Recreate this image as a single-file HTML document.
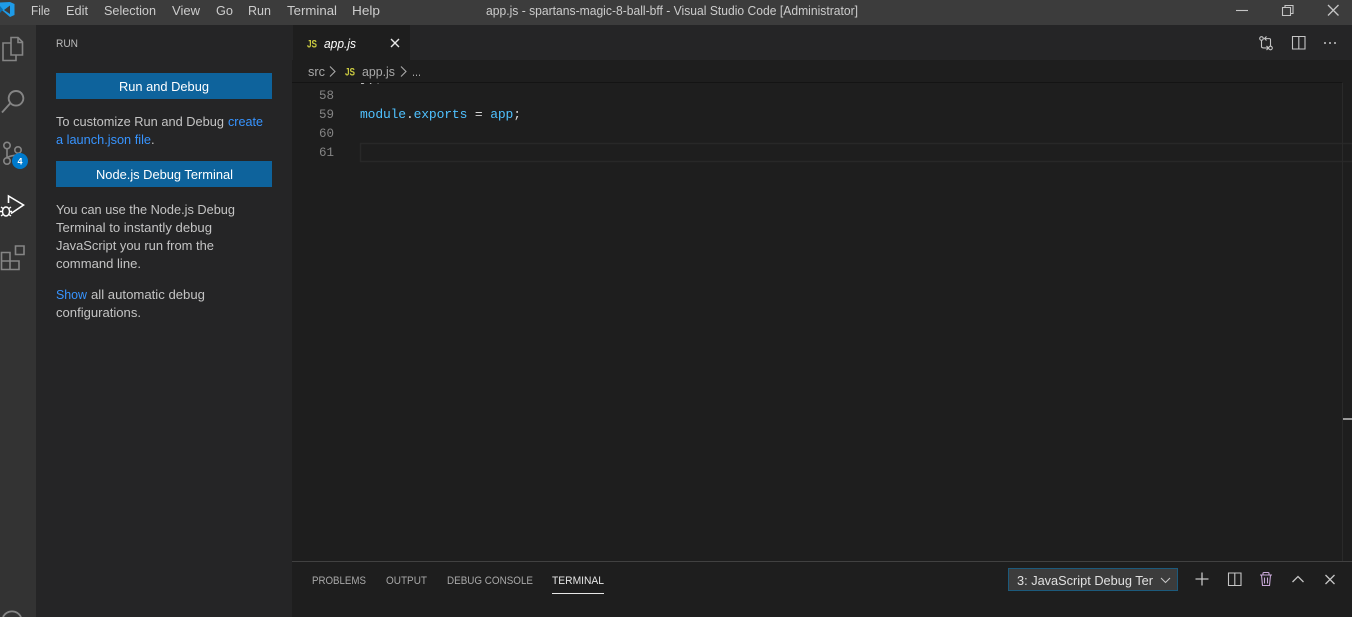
<!DOCTYPE html>
<html lang="en">
<head>
<meta charset="utf-8">
<title>app.js - spartans-magic-8-ball-bff - Visual Studio Code [Administrator]</title>
<style>
html,body{margin:0;padding:0;width:1352px;height:617px;overflow:hidden;background:#1e1e1e}
svg{display:block}
text{font-family:"Liberation Sans",sans-serif;font-size:13px;fill:#ccc;white-space:pre}
.m{fill:#ccc}
.p{fill:#c4c4c4}
.l{fill:#3794ff}
.b{fill:#fff;text-anchor:start}
.c{font-family:"Liberation Mono",monospace;font-size:13px}
.n{font-family:"Liberation Mono",monospace;font-size:13px;fill:#858585}
.t{font-size:11px;fill:#a8a8a8}
.js{font-size:11px;font-weight:bold;fill:#cbcb41}
.i{fill:none;stroke:#858585;stroke-width:1.6}
.w{fill:none;stroke:#c5c5c5;stroke-width:1.1}
</style>
</head>
<body>
<svg width="1352" height="617" viewBox="0 0 1352 617" xmlns="http://www.w3.org/2000/svg">
<!-- backgrounds -->
<rect x="0" y="0" width="1352" height="25" fill="#3c3c3c"/>
<rect x="0" y="25" width="36" height="592" fill="#333"/>
<rect x="36" y="25" width="256" height="592" fill="#252526"/>
<rect x="292" y="25" width="1060" height="592" fill="#1e1e1e"/>
<rect x="292" y="25" width="1060" height="35" fill="#252526"/>
<rect x="293" y="25" width="117" height="35" fill="#1e1e1e"/>

<!-- title bar -->
<path d="M0 2.5 L10 2 L14.5 4 V15 L10 17 L0 8.5 Z" fill="#1e9be8"/>
<path d="M10 5.5 L4 10 L10 14 Z" fill="#3c3c3c"/>
<path d="M0 6 L3 9.5 L0 13 Z" fill="#0a6fb0"/>
<text class="m" x="31" y="15" textLength="19" lengthAdjust="spacingAndGlyphs">File</text>
<text class="m" x="66" y="15" textLength="22" lengthAdjust="spacingAndGlyphs">Edit</text>
<text class="m" x="104" y="15" textLength="52" lengthAdjust="spacingAndGlyphs">Selection</text>
<text class="m" x="172" y="15" textLength="28" lengthAdjust="spacingAndGlyphs">View</text>
<text class="m" x="216" y="15" textLength="17" lengthAdjust="spacingAndGlyphs">Go</text>
<text class="m" x="248" y="15" textLength="23" lengthAdjust="spacingAndGlyphs">Run</text>
<text class="m" x="287" y="15" textLength="50" lengthAdjust="spacingAndGlyphs">Terminal</text>
<text class="m" x="352" y="15" textLength="28" lengthAdjust="spacingAndGlyphs">Help</text>
<text class="m" x="486" y="15" textLength="372" lengthAdjust="spacingAndGlyphs">app.js - spartans-magic-8-ball-bff - Visual Studio Code [Administrator]</text>
<path class="w" d="M1236 10.5H1248"/>
<path class="w" d="M1282.5 7.5h8v8h-8zM1285 7.5V5.5h8v8h-2.5"/>
<path class="w" d="M1328 5l10.5 10.5M1338.5 5L1328 15.5" style="stroke-width:1.3"/>

<!-- activity bar -->
<path class="i" d="M11 37.5H18L22.5 42V55H11ZM18 37.5V42.500H22.500M11 43H3V60.500H16V55"/>
<path class="i" style="stroke-width:1.9" d="M16 91a7.3 7.3 0 1 0 .01 0M10.5 103L2 112.5"/>
<g class="i">
<circle cx="7" cy="145.500" r="3.2"/>
<circle cx="7" cy="161" r="3.2"/>
<circle cx="18" cy="150" r="3.2"/>
<path d="M7 148.700V157.800M18 153.200C18 156 11 155 7.500 157.500"/>
</g>
<circle cx="20" cy="161" r="8" fill="#007acc"/>
<text x="20" y="164.500" text-anchor="middle" style="font-size:9px;font-weight:bold;fill:#fff">4</text>
<path d="M8.500 203V196L23.500 205L11 213.500" fill="none" stroke="#fff" stroke-width="1.600"/>
<g fill="none" stroke="#fff" stroke-width="1.400">
<ellipse cx="6" cy="211.500" rx="3.500" ry="4.500"/>
<path d="M1 207L3 208.500M11 207L9 208.500M0 211.500H2.500M12 211.500H9.500M1 216L3 214.500M11 216L9 214.500"/>
</g>
<path class="i" d="M1.500 252.500H10V269.500H1.500ZM1.500 261H19V269.500H10M10 252.500V261M15.500 246H24V254.500H15.500Z"/>
<path d="M3 617a10 10 0 0 1 18 0" fill="none" stroke="#858585" stroke-width="1.800"/>

<!-- side bar -->
<text x="56" y="47" style="font-size:11px;fill:#bbb" textLength="22" lengthAdjust="spacingAndGlyphs">RUN</text>
<rect x="56" y="73" width="216" height="26" fill="#0e639c"/>
<text class="b" x="119" y="91" textLength="90" lengthAdjust="spacingAndGlyphs">Run and Debug</text>
<text class="p" x="56" y="126" textLength="168" lengthAdjust="spacingAndGlyphs">To customize Run and Debug</text>
<text class="l" x="228" y="126" textLength="35" lengthAdjust="spacingAndGlyphs">create</text>
<text class="l" x="56" y="144" textLength="95" lengthAdjust="spacingAndGlyphs">a launch.json file</text>
<text class="p" x="151" y="144">.</text>
<rect x="56" y="161" width="216" height="26" fill="#0e639c"/>
<text class="b" x="96" y="179" textLength="137" lengthAdjust="spacingAndGlyphs">Node.js Debug Terminal</text>
<text class="p" x="56" y="214" textLength="179" lengthAdjust="spacingAndGlyphs">You can use the Node.js Debug</text>
<text class="p" x="56" y="232" textLength="156" lengthAdjust="spacingAndGlyphs">Terminal to instantly debug</text>
<text class="p" x="56" y="250" textLength="158" lengthAdjust="spacingAndGlyphs">JavaScript you run from the</text>
<text class="p" x="56" y="268" textLength="85" lengthAdjust="spacingAndGlyphs">command line.</text>
<text class="l" x="56" y="299" textLength="31" lengthAdjust="spacingAndGlyphs">Show</text>
<text class="p" x="91" y="299" textLength="114" lengthAdjust="spacingAndGlyphs">all automatic debug</text>
<text class="p" x="56" y="317" textLength="85" lengthAdjust="spacingAndGlyphs">configurations.</text>

<!-- tab -->
<text class="js" x="307" y="47.500" textLength="10" lengthAdjust="spacingAndGlyphs">JS</text>
<text x="324" y="48" style="font-style:italic;fill:#fff" textLength="32" lengthAdjust="spacingAndGlyphs">app.js</text>
<path d="M391 39l8 8M399 39l-8 8" fill="none" stroke="#e8e8e8" stroke-width="1.400"/>

<!-- editor actions -->
<g class="w">
<circle cx="1261.500" cy="38.500" r="1.800"/>
<circle cx="1270.500" cy="48" r="1.800"/>
<path d="M1261.500 40.500V46.500C1261.500 48 1262.500 48 1268.500 48M1266.500 46l2 2-2 2M1270.500 46V39.500C1270.500 38.500 1270 38.500 1264.500 38.500M1266.500 36.500l-2 2 2 2"/>
<path d="M1292.500 36.500h12.500v12.500h-12.500zM1298.800 36.500v12.500"/>
<path d="M1324 43h2M1329 43h2M1334 43h2" style="stroke-width:1.500"/>
</g>

<!-- breadcrumbs -->
<text x="308" y="76" style="fill:#a9a9a9" textLength="17" lengthAdjust="spacingAndGlyphs">src</text>
<path d="M330 66.500l5 5-5 5" fill="none" stroke="#a9a9a9" stroke-width="1.100"/>
<text class="js" x="345" y="75.500" textLength="10" lengthAdjust="spacingAndGlyphs">JS</text>
<text x="362" y="76" style="fill:#a9a9a9" textLength="33" lengthAdjust="spacingAndGlyphs">app.js</text>
<path d="M401 66.500l5 5-5 5" fill="none" stroke="#a9a9a9" stroke-width="1.100"/>
<text x="412" y="76" style="fill:#a9a9a9" textLength="9" lengthAdjust="spacingAndGlyphs">...</text>

<!-- code -->
<svg x="292" y="83" width="1060" height="478" viewBox="292 83 1060 478">
<text class="c" x="360" y="81.500" style="fill:#d4d4d4" textLength="23" lengthAdjust="spacingAndGlyphs">});</text>
</svg>
<rect x="292" y="82" width="1050" height="1" fill="#141414"/>
<rect x="360.500" y="143.500" width="992" height="18" fill="none" stroke="#282828" stroke-width="1.500"/>
<text class="n" x="319" y="99" textLength="15" lengthAdjust="spacingAndGlyphs">58</text>
<text class="n" x="319" y="118" textLength="15" lengthAdjust="spacingAndGlyphs">59</text>
<text class="n" x="319" y="137" textLength="15" lengthAdjust="spacingAndGlyphs">60</text>
<text class="n" x="319" y="156" textLength="15" lengthAdjust="spacingAndGlyphs">61</text>
<text class="c" x="360" y="118" textLength="161" lengthAdjust="spacing" style="fill:#d4d4d4"><tspan fill="#4fc1ff">module</tspan>.<tspan fill="#4fc1ff">exports</tspan> = <tspan fill="#4fc1ff">app</tspan>;</text>

<!-- overview ruler -->
<rect x="1342" y="83" width="1" height="478" fill="#2a2a2a"/>
<rect x="1343" y="418" width="9" height="2" fill="#9a9a9a"/>

<!-- panel -->
<rect x="292" y="561" width="1060" height="1" fill="#414141"/>
<text class="t" x="312" y="584" textLength="54" lengthAdjust="spacingAndGlyphs">PROBLEMS</text>
<text class="t" x="386" y="584" textLength="41" lengthAdjust="spacingAndGlyphs">OUTPUT</text>
<text class="t" x="447" y="584" textLength="86" lengthAdjust="spacingAndGlyphs">DEBUG CONSOLE</text>
<text class="t" x="552" y="584" textLength="52" lengthAdjust="spacingAndGlyphs" style="fill:#e7e7e7">TERMINAL</text>
<rect x="552" y="593" width="52" height="1" fill="#e7e7e7"/>

<rect x="1008.500" y="568.500" width="169" height="22" fill="#3c3c3c" stroke="#1c5a7c"/>
<text x="1017" y="585" style="fill:#e0e0e0" textLength="136" lengthAdjust="spacingAndGlyphs">3: JavaScript Debug Ter</text>
<path d="M1161 578l4.500 4.500 4.500-4.500" fill="none" stroke="#c5c5c5" stroke-width="1.100"/>
<g class="w">
<path d="M1195.500 579H1208.500M1202 572.500V585.500" style="stroke-width:1.300"/>
<path d="M1228.500 573h12.500v12.500h-12.500zM1234.800 573v12.500"/>
<path d="M1260 575h12M1263 575v-1.500q0-1 1-1h4q1 0 1 1V575M1261.500 575l1 10.500h7l1-10.500M1264.500 577.500v6M1267.500 577.500v6" style="stroke:#c8a8d8"/>
<path d="M1292.500 582l5.500-5.500 5.500 5.500" style="stroke-width:1.300"/>
<path d="M1325.500 575l9 9M1334.500 575l-9 9" style="stroke-width:1.300"/>
</g>
</svg>
</body>
</html>
